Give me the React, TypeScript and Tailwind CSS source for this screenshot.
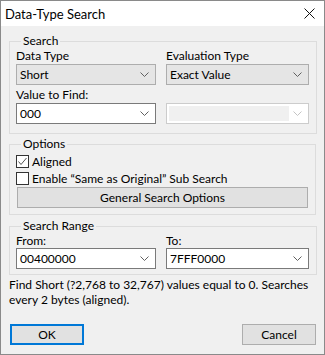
import React from "react";

const font = { fontFamily: 'Lato, "Noto Sans", sans-serif' };

function Chevron({ disabled = false }: { disabled?: boolean }) {
  return (
    <svg width="9" height="5" viewBox="0 0 9 5" className="shrink-0">
      <polyline
        points="0.5,0.5 4.5,4.5 8.5,0.5"
        fill="none"
        stroke={disabled ? "#c4c4c4" : "#606060"}
        strokeWidth="1"
      />
    </svg>
  );
}

function ListCombo({ value }: { value: string }) {
  return (
    <div className="flex h-[21px] items-center justify-between border border-[#adadad] bg-[#e5e5e5] pl-[3px] pr-[6px]">
      <span>{value}</span>
      <Chevron />
    </div>
  );
}

function EditCombo({ value }: { value: string }) {
  return (
    <div className="flex h-[21px] items-center justify-between border border-[#7a7a7a] bg-white pl-[3px] pr-[6px]">
      <span>{value}</span>
      <Chevron />
    </div>
  );
}

function DisabledCombo() {
  return (
    <div className="flex h-[21px] items-center justify-between border border-[#cccccc] bg-white p-[2px] pr-[6px]">
      <div className="h-full w-[120px] bg-[#f0f0f0]" />
      <Chevron disabled />
    </div>
  );
}

function Group({ title, children, className = "" }: { title: string; children: React.ReactNode; className?: string }) {
  return (
    <fieldset className={"border border-[#dcdcdc] pl-[6px] pr-[7px] " + className}>
      <legend className="ml-[5px] px-[2px] leading-[16px]">{title}</legend>
      {children}
    </fieldset>
  );
}

function Check({ checked, label }: { checked: boolean; label: string }) {
  return (
    <div className="flex h-[17px] items-center gap-[3px]">
      <div className="flex h-[13px] w-[13px] items-center justify-center border border-[#333333] bg-white">
        {checked && (
          <svg width="11" height="11" viewBox="0 0 11 11">
            <polyline points="1.5,5.5 4,8.5 9.5,2" fill="none" stroke="#555555" strokeWidth="1" />
          </svg>
        )}
      </div>
      <span>{label}</span>
    </div>
  );
}

export default function App() {
  return (
    <div
      style={font}
      className="flex h-[355px] w-[325px] flex-col border border-[#8a8a8a] bg-[#f0f0f0] text-[12px] leading-[16px] text-black"
    >
      {/* Title bar */}
      <div className="flex h-[25px] shrink-0 items-center justify-between bg-white pl-[4px] pr-[9px]">
        <span className="text-[13px]">Data-Type Search</span>
        <svg width="11" height="11" viewBox="0 0 11 11">
          <path d="M0.5 0.5 L10.5 10.5 M10.5 0.5 L0.5 10.5" stroke="#111" strokeWidth="1" />
        </svg>
      </div>

      <div className="flex flex-1 flex-col px-[8px] pt-[7px]">
        <Group title="Search" className="pb-[9px]">
          <div className="grid grid-cols-[140px_143px] gap-x-[10px]">
            <div className="flex flex-col">
              <span className="h-[15px] leading-[14px]">Data Type</span>
              <ListCombo value="Short" />
            </div>
            <div className="flex flex-col">
              <span className="h-[15px] leading-[14px]">Evaluation Type</span>
              <ListCombo value="Exact Value" />
            </div>
            <div className="flex flex-col">
              <span className="flex h-[18px] items-end">Value to Find:</span>
              <EditCombo value="000" />
            </div>
            <div className="flex flex-col">
              <span className="h-[18px]" />
              <DisabledCombo />
            </div>
          </div>
        </Group>

        <Group title="Options" className="mt-[2px] pb-[6px]">
          <div className="mt-[1px] flex flex-col">
            <Check checked label="Aligned" />
            <Check checked={false} label={"Enable \u201CSame as Original\u201D Sub Search"} />
            <button className="ml-[1px] h-[21px] w-[291px] border border-[#adadad] bg-[#e1e1e1]">
              General Search Options
            </button>
          </div>
        </Group>

        <Group title="Search Range" className="mt-[3px] pb-[5px]">
          <div className="grid grid-cols-[140px_143px] gap-x-[10px]">
            <div className="flex flex-col">
              <span className="h-[14px] leading-[13px]">From:</span>
              <EditCombo value="00400000" />
            </div>
            <div className="flex flex-col">
              <span className="h-[14px] leading-[13px]">To:</span>
              <EditCombo value="7FFF0000" />
            </div>
          </div>
        </Group>

        <p className="mt-[2px] leading-[15px]">
          Find Short (?2,768 to 32,767) values equal to 0. Searches every 2 bytes (aligned).
        </p>

        <div className="mt-auto mb-[9px] flex justify-between pl-[1px]">
          <button className="h-[21px] w-[74px] border-2 border-[#0078d7] bg-[#e1e1e1]">OK</button>
          <button className="h-[21px] w-[74px] border border-[#adadad] bg-[#e1e1e1]">Cancel</button>
        </div>
      </div>
    </div>
  );
}
